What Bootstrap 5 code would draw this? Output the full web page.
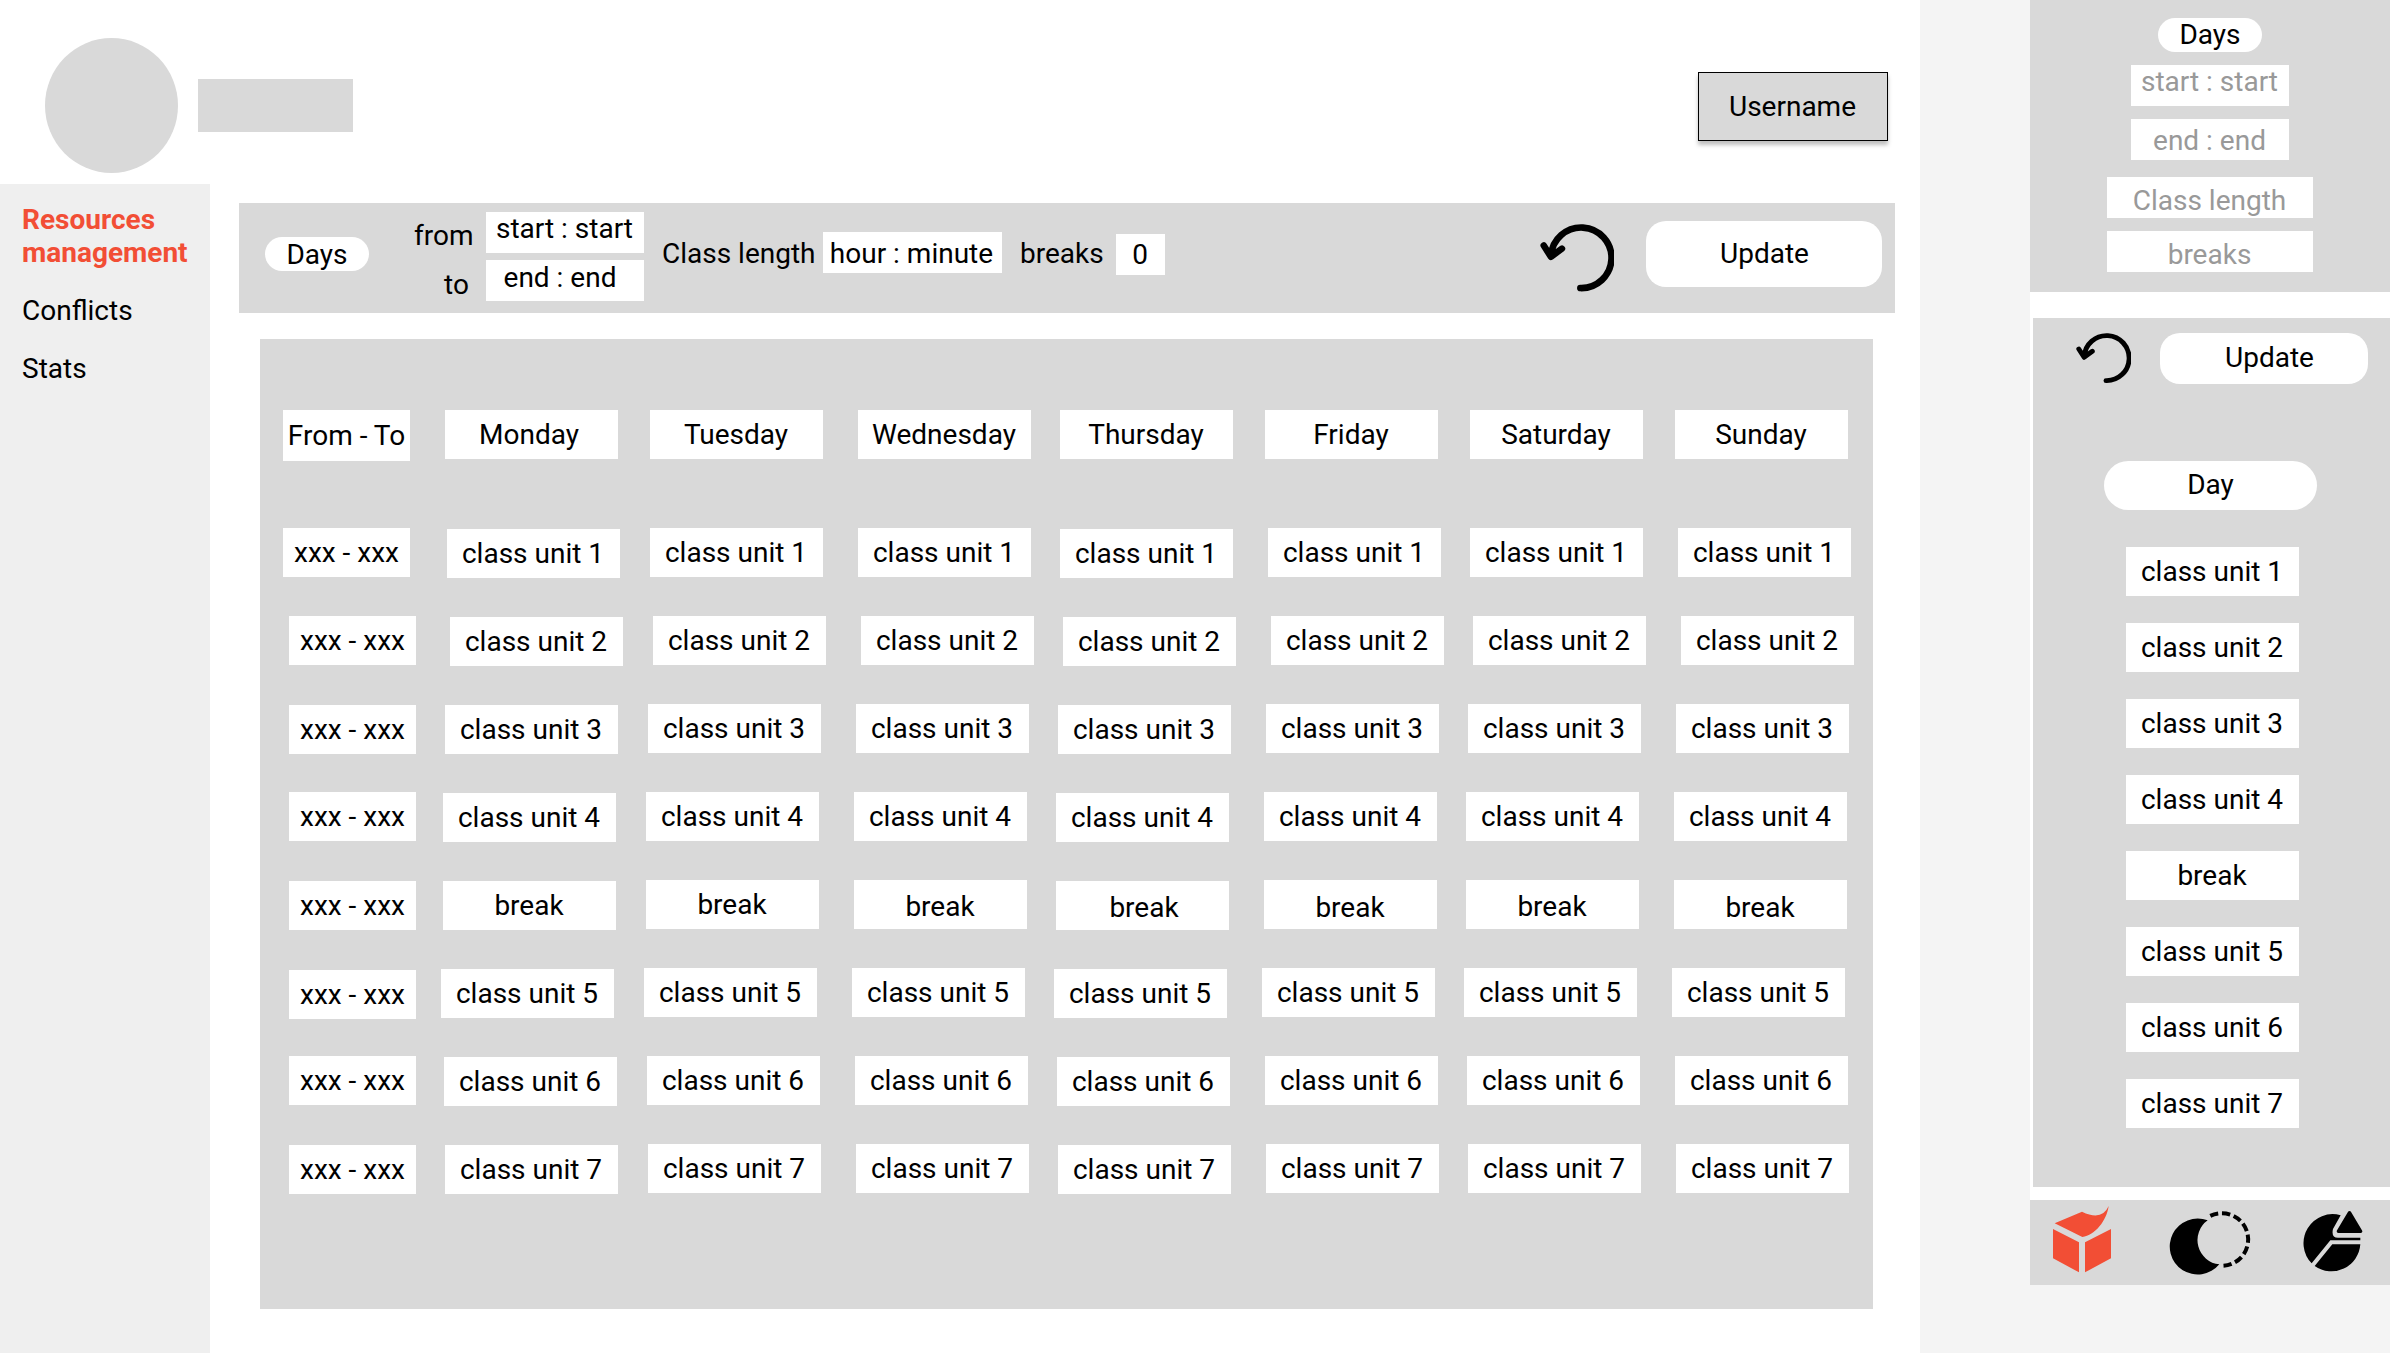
<!DOCTYPE html>
<html lang="en">
<head>
<meta charset="utf-8">
<meta name="viewport" content="width=device-width, initial-scale=1">
<title>Resources management</title>
<link href="https://cdn.jsdelivr.net/npm/bootstrap@5.3.0/dist/css/bootstrap.min.css" rel="stylesheet">
<style>
  body { font-family: Roboto, "Liberation Sans", sans-serif; font-size: 28px; line-height: 33px; color: #000; background: #f4f4f4; width: 2390px; height: 1353px; overflow: hidden; white-space: nowrap; }
  .grey { background: #d9d9d9; }

  /* Desktop page */
  .desktop { width: 1920px; height: 1353px; }
  .topbar { height: 184px; padding: 38px 32px 0 45px; }
  .logo { width: 133px; height: 135px; border-radius: 50%; }
  .brand-bar { width: 155px; height: 53px; margin: 41px 0 0 20px; }
  .user-btn { width: 190px; height: 69px; margin-top: 34px; padding-right: 1px; line-height: 67px; border: 1px solid #000; box-shadow: 0 4px 4px rgba(0,0,0,.25); text-align: center; }
  .side { width: 210px; height: 1169px; padding: 19px 0 0 22px; background: #efefef; }
  .side a { color: #000; text-decoration: none; display: block; margin-bottom: 25px; }
  .side a.current { color: #f24e35; font-weight: 700; white-space: normal; }
  .work { padding: 19px 25px 0 29px; }
  .toolbar { height: 110px; margin-bottom: 26px; }
  .pill { width: 104px; height: 34px; line-height: 34px; border-radius: 17px; }
  .toolbar .pill { margin: 34px 0 0 26px; line-height: 36px; }
  .field { height: 41px; line-height: 41px; background: #fff; text-align: center; }
  .w-time { width: 158px; }
  .update { border-radius: 20px; background: #fff; text-align: center; }
  .range-labels { width: 72px; margin-left: 45px; padding-top: 16px; }
  .range-labels span { display: block; height: 49px; }
  .range-labels span + span { padding-left: 30px; }
  .field-label { margin: 34px 0 0 18px; line-height: 34px; }

  /* Timetable */
  .timetable { width: 1613px; height: 970px; margin-left: 21px; padding: 71px 0 0 29px; }
  .slot-row { display: flex; align-items: flex-start; height: 88px; }
  .slot { width: 173px; height: 49px; padding-right: 1px; line-height: 49px; background: #fff; text-align: center; flex: none; }
  .span-cell { width: 127px; padding-right: 0; }
  .days { display: flex; align-items: flex-start; }
  .days > :nth-child(2), .days > :nth-child(4) { margin-left: 30px; }
  .days > :nth-child(3), .days > :nth-child(5), .days > :nth-child(7) { margin-left: 35px; }
  .days > :nth-child(4), .days > :nth-child(6) { margin-left: 29px; }
  .slot-row:not(.head) .days > :nth-child(3n+1):not(:nth-child(7)) { margin-top: 1px; }
  .head { height: 118px; }
  .head .days > :nth-child(n+5) { margin-left: 32px; }
  .head .days > :nth-child(2) { margin-left: 32px; }
  .head .span-cell { height: 51px; line-height: 51px; }
  .head, .first { margin-left: -6px; }
  .g25 { margin-left: 25px; } .g27 { margin-left: 27px; } .g28 { margin-left: 28px; } .g29 { margin-left: 29px; }
  .g34 { margin-left: 34px; } .g35 { margin-left: 35px; } .g37 { margin-left: 37px; }
  .d1 { margin-top: 1px; } .d2 { margin-top: 2px; }
  .t2 { line-height: 53px; } .t3 { line-height: 55px; }

  /* Mobile page */
  .phone { width: 360px; height: 1285px; margin-left: 110px; }
  .filters { height: 292px; padding-top: 18px; margin-bottom: 26px; }
  .filters .field { color: #999; padding-right: 1px; }
  .agenda { height: 869px; margin: 0 0 13px 3px; padding-top: 15px; }
  .day-pill { width: 213px; height: 49px; line-height: 48px; border-radius: 24.5px; margin: 77px auto 37px 71px; }
  .agenda .slot { margin: 0 0 27px 93px; }
  .dock { height: 85px; }
  svg { display: block; }
</style>
</head>
<body>
<div class="d-flex align-items-start">

  <main class="desktop bg-white">
    <header class="topbar d-flex align-items-start">
      <div class="logo grey"></div>
      <div class="brand-bar grey"></div>
      <div class="user-btn grey ms-auto">Username</div>
    </header>
    <div class="d-flex">
      <nav class="side">
        <a class="current" href="#">Resources management</a>
        <a href="#">Conflicts</a>
        <a href="#">Stats</a>
      </nav>
      <section class="work flex-grow-1">
        <div class="toolbar grey d-flex align-items-start">
          <div class="pill bg-white text-center">Days</div>
          <div class="range-labels"><span>from</span><span>to</span></div>
          <div style="padding-top:9px">
            <div class="field w-time" style="line-height:33px;margin-bottom:7px;padding-right:1px">start : start</div>
            <div class="field w-time" style="line-height:35px;padding-right:10px">end : end</div>
          </div>
          <div class="field-label" style="width:161px">Class length</div>
          <div class="field" style="margin-top:29px;width:179px;line-height:43px;padding-right:2px">hour : minute</div>
          <div class="field-label" style="width:96px">breaks</div>
          <div class="field" style="margin-top:31px;width:49px;padding-right:1px">0</div>
          <svg class="ms-auto" style="margin-top:21px" width="74" height="68" viewBox="0 0 55 50.5" fill="none" stroke="#000" stroke-width="4.9" stroke-linecap="round" stroke-linejoin="round"><path d="M30 47.6A22.5 22.5 0 1 0 8.2 23.5M2.8 16l5.3 8.3 8.2-6"/></svg>
          <div class="update" style="width:236px;height:66px;line-height:66px;margin:18px 13px 0 32px;padding-left:1px">Update</div>
        </div>

        <div class="timetable grey">
          <div class="slot-row head">
            <div class="slot span-cell">From - To</div>
            <div class="days g35"><div class="slot" style="padding-right:5px">Monday</div><div class="slot">Tuesday</div><div class="slot">Wednesday</div><div class="slot">Thursday</div><div class="slot">Friday</div><div class="slot">Saturday</div><div class="slot">Sunday</div></div>
          </div>
          <div class="slot-row first">
            <div class="slot span-cell">xxx - xxx</div>
            <div class="days g37"><div class="slot">class unit 1</div><div class="slot">class unit 1</div><div class="slot">class unit 1</div><div class="slot">class unit 1</div><div class="slot">class unit 1</div><div class="slot">class unit 1</div><div class="slot">class unit 1</div></div>
          </div>
          <div class="slot-row">
            <div class="slot span-cell">xxx - xxx</div>
            <div class="days g34"><div class="slot">class unit 2</div><div class="slot">class unit 2</div><div class="slot">class unit 2</div><div class="slot">class unit 2</div><div class="slot">class unit 2</div><div class="slot">class unit 2</div><div class="slot">class unit 2</div></div>
          </div>
          <div class="slot-row">
            <div class="slot span-cell d1">xxx - xxx</div>
            <div class="days g29"><div class="slot">class unit 3</div><div class="slot">class unit 3</div><div class="slot">class unit 3</div><div class="slot">class unit 3</div><div class="slot">class unit 3</div><div class="slot">class unit 3</div><div class="slot">class unit 3</div></div>
          </div>
          <div class="slot-row">
            <div class="slot span-cell">xxx - xxx</div>
            <div class="days g27"><div class="slot">class unit 4</div><div class="slot">class unit 4</div><div class="slot">class unit 4</div><div class="slot">class unit 4</div><div class="slot">class unit 4</div><div class="slot">class unit 4</div><div class="slot">class unit 4</div></div>
          </div>
          <div class="slot-row">
            <div class="slot span-cell d1">xxx - xxx</div>
            <div class="days g27"><div class="slot">break</div><div class="slot">break</div><div class="slot t2">break</div><div class="slot t2" style="padding-left:4px">break</div><div class="slot t3">break</div><div class="slot t2">break</div><div class="slot t3">break</div></div>
          </div>
          <div class="slot-row">
            <div class="slot span-cell d2">xxx - xxx</div>
            <div class="days g25"><div class="slot">class unit 5</div><div class="slot">class unit 5</div><div class="slot">class unit 5</div><div class="slot">class unit 5</div><div class="slot">class unit 5</div><div class="slot">class unit 5</div><div class="slot">class unit 5</div></div>
          </div>
          <div class="slot-row">
            <div class="slot span-cell">xxx - xxx</div>
            <div class="days g28"><div class="slot">class unit 6</div><div class="slot">class unit 6</div><div class="slot">class unit 6</div><div class="slot">class unit 6</div><div class="slot">class unit 6</div><div class="slot">class unit 6</div><div class="slot">class unit 6</div></div>
          </div>
          <div class="slot-row">
            <div class="slot span-cell d1">xxx - xxx</div>
            <div class="days g29"><div class="slot">class unit 7</div><div class="slot">class unit 7</div><div class="slot">class unit 7</div><div class="slot">class unit 7</div><div class="slot">class unit 7</div><div class="slot">class unit 7</div><div class="slot">class unit 7</div></div>
          </div>
        </div>
      </section>
    </div>
  </main>

  <aside class="phone bg-white">
    <div class="filters grey d-flex flex-column align-items-center">
      <div class="pill bg-white text-center">Days</div>
      <div class="field w-time" style="margin-top:13px;line-height:33px">start : start</div>
      <div class="field w-time" style="margin-top:13px;line-height:43px">end : end</div>
      <div class="field" style="margin-top:17px;width:206px;line-height:47px">Class length</div>
      <div class="field" style="margin-top:13px;width:206px;line-height:47px">breaks</div>
    </div>
    <div class="agenda grey">
      <div class="d-flex">
        <svg style="margin-left:43px" width="55" height="50.5" viewBox="0 0 55 50.5" fill="none" stroke="#000" stroke-width="4.9" stroke-linecap="round" stroke-linejoin="round"><path d="M30 47.6A22.5 22.5 0 1 0 8.2 23.5M2.8 16l5.3 8.3 8.2-6"/></svg>
        <div class="update" style="width:208px;height:51px;line-height:50px;margin-left:29px;padding-left:11px">Update</div>
      </div>
      <div class="day-pill bg-white text-center">Day</div>
      <div class="slot">class unit 1</div>
      <div class="slot">class unit 2</div>
      <div class="slot">class unit 3</div>
      <div class="slot">class unit 4</div>
      <div class="slot">break</div>
      <div class="slot">class unit 5</div>
      <div class="slot">class unit 6</div>
      <div class="slot">class unit 7</div>
    </div>
    <div class="dock grey">
      <svg width="360" height="85" viewBox="60 90 1080 255">
        <g fill="#f24e35">
          <path d="M134 160L216 125Q276 154 296 108C290 152 255 196 217 201Z"/>
          <path d="M129 177L207 217V307L129 265ZM303 177L225 217V307L303 265Z"/>
        </g>
        <path d="M593 151A84 84 0 1 0 628 283A73 73 0 0 1 593 151Z"/>
        <path d="M600.9 137.5A79 79 0 1 1 639.6 287.4" fill="none" stroke="#000" stroke-width="12" stroke-dasharray="25 11.2"/>
        <path d="M992 136L969 177Q963 203 984 203H1051V211H961L905 280A87 87 0 0 1 992 136ZM967 223H1051A87 87 0 0 1 914 288Z"/>
        <path d="M1018.500 128L1052 184H985Z" stroke="#000" stroke-width="10" stroke-linejoin="round"/>
      </svg>
    </div>
  </aside>
</div>
<script src="https://cdn.jsdelivr.net/npm/bootstrap@5.3.0/dist/js/bootstrap.bundle.min.js"></script>
</body>
</html>
